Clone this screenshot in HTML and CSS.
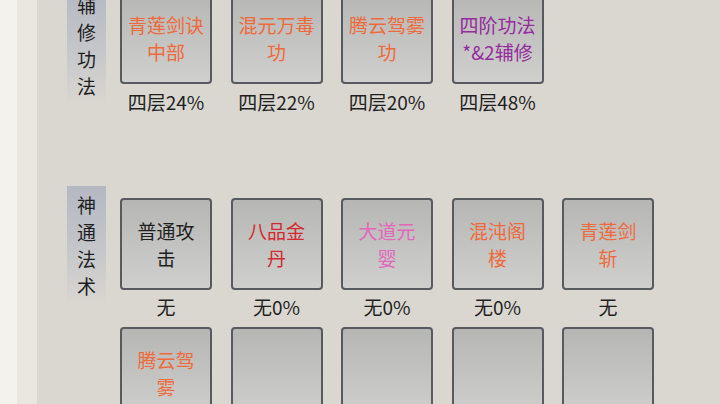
FILE: index.html
```html
<!DOCTYPE html>
<html lang="zh-CN">
<head>
    <meta charset="UTF-8">
    <meta name="viewport" content="width=device-width, initial-scale=1.0">
    <title>功法神通</title>
    <link rel="stylesheet" href="styles.css">
</head>
<body>
  <div class="edge"></div>
  <div class="strip"></div>
  <div class="panel">
    <div class="section section-aux">
      <div class="label">辅修功法</div>
      <div class="slots">
        <div class="slot">
          <div class="card"><span class="orange">青莲剑诀中部</span></div>
          <div class="caption">四层24%</div>
        </div>
        <div class="slot">
          <div class="card"><span class="orange">混元万毒功</span></div>
          <div class="caption">四层22%</div>
        </div>
        <div class="slot">
          <div class="card"><span class="orange">腾云驾雾功</span></div>
          <div class="caption">四层20%</div>
        </div>
        <div class="slot">
          <div class="card"><span class="purple">四阶功法 *&amp;2辅修</span></div>
          <div class="caption">四层48%</div>
        </div>
      </div>
    </div>

    <div class="section section-skill">
      <div class="label">神通法术</div>
      <div class="slots">
        <div class="slot">
          <div class="card"><span>普通攻击</span></div>
          <div class="caption">无</div>
        </div>
        <div class="slot">
          <div class="card"><span class="red">八品金丹</span></div>
          <div class="caption">无0%</div>
        </div>
        <div class="slot">
          <div class="card"><span class="pink">大道元婴</span></div>
          <div class="caption">无0%</div>
        </div>
        <div class="slot">
          <div class="card"><span class="orange">混沌阁楼</span></div>
          <div class="caption">无0%</div>
        </div>
        <div class="slot">
          <div class="card"><span class="orange">青莲剑斩</span></div>
          <div class="caption">无</div>
        </div>
        <div class="slot">
          <div class="card"><span class="orange">腾云驾雾</span></div>
          <div class="caption"></div>
        </div>
        <div class="slot">
          <div class="card"></div>
          <div class="caption"></div>
        </div>
        <div class="slot">
          <div class="card"></div>
          <div class="caption"></div>
        </div>
        <div class="slot">
          <div class="card"></div>
          <div class="caption"></div>
        </div>
        <div class="slot">
          <div class="card"></div>
          <div class="caption"></div>
        </div>
      </div>
    </div>
  </div>
</body>
</html>
```

FILE: styles.css
```css
body {
    margin: 0;
    height: 404px;
    overflow: hidden;
    display: flex;
    font-family: "Noto Sans CJK SC", "Noto Sans", sans-serif;
    font-size: 19px;
    color: #1f1f1f;
    background-color: #dad7d1;
}

.edge {
    width: 17px;
    flex-shrink: 0;
    background-color: #f3f2ed;
}

.strip {
    width: 20px;
    flex-shrink: 0;
    background-color: #e9e7df;
}

.panel {
    flex: 1;
    padding-left: 30px;
    background-color: #dad7d1;
}

.section {
    display: flex;
    align-items: flex-start;
    gap: 14px;
}

.section-aux {
    margin-top: -14px;
}

.section-aux .slots {
    padding-top: 6px;
}

.section-skill {
    margin-top: 69px;
}

.section-skill .slots {
    padding-top: 12px;
}

/* vertical section title, one character per line */
.label {
    width: 39px;
    box-sizing: border-box;
    padding: 5px 10px 6px;
    line-height: 27px;
    text-align: center;
    word-break: break-all;
    background: linear-gradient(#b4b8c2, #c3c5c9 50%, rgba(218, 215, 209, 0));
}

.slots {
    display: grid;
    grid-template-columns: repeat(5, 92px);
    column-gap: 18.5px;
    row-gap: 4px;
}

.section-aux .slots {
    grid-template-columns: repeat(4, 92px);
}

.slot {
    display: flex;
    flex-direction: column;
    align-items: center;
}

.card {
    width: 92px;
    height: 92px;
    box-sizing: border-box;
    border: 2px solid #575a61;
    border-radius: 4px;
    background: linear-gradient(#b6b6b4, #cfcfcd);
    display: flex;
    align-items: center;
    justify-content: center;
    text-align: center;
    line-height: 27px;
    padding: 0 4px;
}

.section-skill .card {
    padding: 0 12px;
}

.caption {
    height: 33px;
    line-height: 33px;
    white-space: nowrap;
}

.section-aux .caption {
    line-height: 36px;
}

.orange {
    color: #ef6a3b;
}

.red {
    color: #d42a2f;
}

.pink {
    color: #e267ba;
}

.purple {
    color: #952c9f;
}
```
